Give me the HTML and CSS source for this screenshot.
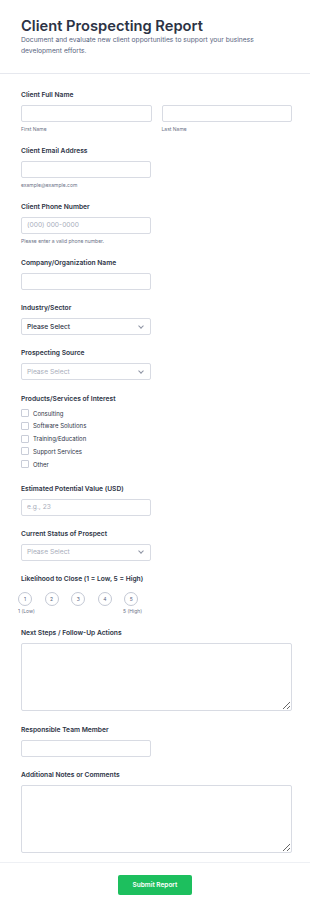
FILE: index.html
```html
<!DOCTYPE html>
<html lang="en">
<head>
  <meta charset="UTF-8" />
  <meta name="viewport" content="width=device-width, initial-scale=1.0"/>
  <title>Client Prospecting Report</title>
  <link rel="stylesheet" href="styles.css">
</head>
<body>

  <header class="form-header">
    <h1>Client Prospecting Report</h1>
    <p>Document and evaluate new client opportunities to support your business development efforts.</p>
  </header>

  <form class="form-body">
    <div class="field">
      <label>Client Full Name</label>
      <div class="name-row">
        <div class="name-col">
          <input type="text" class="input full">
          <span class="sublabel">First Name</span>
        </div>
        <div class="name-col">
          <input type="text" class="input full">
          <span class="sublabel">Last Name</span>
        </div>
      </div>
    </div>

    <div class="field">
      <label>Client Email Address</label>
      <input type="email" class="input">
      <span class="sublabel">example@example.com</span>
    </div>

    <div class="field">
      <label>Client Phone Number</label>
      <input type="tel" class="input" placeholder="(000) 000-0000">
      <span class="sublabel">Please enter a valid phone number.</span>
    </div>

    <div class="field">
      <label>Company/Organization Name</label>
      <input type="text" class="input">
    </div>

    <div class="field">
      <label>Industry/Sector</label>
      <div class="select filled">Please Select <span class="chevron"></span></div>
    </div>

    <div class="field">
      <label>Prospecting Source</label>
      <div class="select">Please Select <span class="chevron"></span></div>
    </div>

    <div class="field">
      <label class="tight">Products/Services of Interest</label>
      <div class="checks">
        <div class="check"><span class="box"></span>Consulting</div>
        <div class="check"><span class="box"></span>Software Solutions</div>
        <div class="check"><span class="box"></span>Training/Education</div>
        <div class="check"><span class="box"></span>Support Services</div>
        <div class="check"><span class="box"></span>Other</div>
      </div>
    </div>

    <div class="field">
      <label>Estimated Potential Value (USD)</label>
      <input type="text" class="input" placeholder="e.g., 23">
    </div>

    <div class="field">
      <label>Current Status of Prospect</label>
      <div class="select">Please Select <span class="chevron"></span></div>
    </div>

    <div class="field">
      <label>Likelihood to Close (1 = Low, 5 = High)</label>
      <div class="rating">
        <div class="circles">
          <span class="circle">1</span>
          <span class="circle">2</span>
          <span class="circle">3</span>
          <span class="circle">4</span>
          <span class="circle">5</span>
        </div>
        <div class="rating-labels">
          <span>1 (Low)</span>
          <span>5 (High)</span>
        </div>
      </div>
    </div>

    <div class="field">
      <label>Next Steps / Follow-Up Actions</label>
      <textarea class="textarea"></textarea>
    </div>

    <div class="field">
      <label>Responsible Team Member</label>
      <input type="text" class="input">
    </div>

    <div class="field">
      <label>Additional Notes or Comments</label>
      <textarea class="textarea"></textarea>
    </div>
  </form>

  <div class="form-footer">
    <button type="button" class="submit">Submit Report</button>
  </div>

</body>
</html>
```

FILE: styles.css
```css
body {
  font-family: 'Inter', 'Noto Sans', sans-serif;
  margin: 0;
  padding: 0;
  background-color: #ffffff;
  color: #2c3345;
}

.form-header {
  padding: 18px 18px 16px 21px;
  border-bottom: 1px solid #e6e8ee;
}

.form-header h1 {
  margin: 0;
  font-size: 14.7px;
  line-height: 17px;
  font-weight: 600;
  color: #2c3345;
}

.form-header p {
  margin: 0;
  font-size: 6.7px;
  line-height: 11px;
  color: #57647e;
}

.form-body {
  display: flex;
  flex-direction: column;
  gap: 14.2px;
  padding: 16.5px 18px 9.5px 21px;
  border-bottom: 1px solid #eef0f4;
}

.field {
  display: flex;
  flex-direction: column;
  align-items: flex-start;
}

label {
  font-size: 6.7px;
  line-height: 9px;
  font-weight: 600;
  margin-bottom: 5px;
}

label.tight {
  margin-bottom: 3px;
}

.input, .select {
  box-sizing: border-box;
  width: 130px;
  height: 17px;
  border: 1px solid #d8dbe3;
  border-radius: 2px;
  padding: 0 5px;
  font-family: inherit;
  font-size: 6.7px;
  color: #2c3345;
  background: #ffffff;
}

.input::placeholder {
  color: #a9aebb;
}

.input.full {
  width: 100%;
}

.name-row {
  display: flex;
  gap: 10px;
  width: 100%;
}

.name-col {
  flex: 1;
  display: flex;
  flex-direction: column;
}

.sublabel {
  font-size: 5px;
  line-height: 7px;
  margin-top: 4px;
  color: #6c7387;
}

.select {
  display: flex;
  align-items: center;
  justify-content: space-between;
  color: #a9aebb;
}

.select.filled {
  color: #2c3345;
  font-weight: 500;
}

.chevron {
  width: 3px;
  height: 3px;
  border-right: 1px solid #8d93a3;
  border-bottom: 1px solid #8d93a3;
  transform: rotate(45deg);
  margin: 0 2px 2px 0;
}

.checks {
  display: flex;
  flex-direction: column;
}

.check {
  display: flex;
  align-items: center;
  gap: 4px;
  height: 12.8px;
  font-size: 6px;
  color: #2c3345;
}

.box {
  box-sizing: border-box;
  width: 8px;
  height: 8px;
  border: 1px solid #c9cdd8;
  border-radius: 1px;
}

.rating {
  margin-left: -3px;
  width: 124px;
}

.circles {
  display: flex;
  gap: 12.6px;
  margin-top: 3px;
}

.circle {
  box-sizing: border-box;
  width: 14px;
  height: 14px;
  border: 1px solid #c3c8d4;
  border-radius: 50%;
  display: flex;
  align-items: center;
  justify-content: center;
  font-size: 5px;
  color: #57647e;
}

.rating-labels {
  display: flex;
  justify-content: space-between;
  font-size: 5px;
  line-height: 7px;
  color: #6c7387;
  margin-top: 2px;
}

.textarea {
  box-sizing: border-box;
  width: 100%;
  height: 68px;
  border: 1px solid #d8dbe3;
  border-radius: 2px;
  resize: vertical;
  font-family: inherit;
}

.form-footer {
  display: flex;
  justify-content: center;
  padding: 12px 0 16px;
}

.submit {
  width: 74px;
  height: 20px;
  border: none;
  border-radius: 2px;
  background-color: #1dbf5e;
  color: #ffffff;
  font-family: inherit;
  font-size: 6.5px;
  font-weight: 600;
  cursor: pointer;
}
```
